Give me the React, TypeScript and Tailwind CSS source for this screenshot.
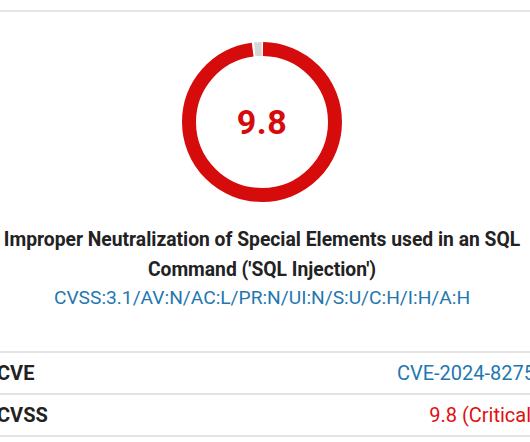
import React from 'react';

const score = 9.8;

function ScoreDonut({ value }: { value: number }) {
  const r = 73;
  const c = 2 * Math.PI * r;
  const gap = 2;
  const red = (value / 10) * c;
  const rest = c - red;

  return (
    <div className="relative w-[162px] h-[162px]">
      <svg width="162" height="162" viewBox="0 0 162 162" className="-rotate-90">
        <circle
          cx="81"
          cy="81"
          r={r}
          fill="none"
          stroke="#d60b0b"
          strokeWidth="14"
          strokeDasharray={`${red - gap} ${c}`}
          strokeDashoffset={-gap / 2}
        />
        <circle
          cx="81"
          cy="81"
          r={r}
          fill="none"
          stroke="#d6d6d6"
          strokeWidth="14"
          strokeDasharray={`${rest - gap} ${c}`}
          strokeDashoffset={-(red + gap / 2)}
        />
      </svg>
      <div className="absolute inset-0 flex items-center justify-center text-[34px] font-bold text-[#d60b0b] tracking-[0.5px]">
        {value}
      </div>
    </div>
  );
}

const rows = [
  { label: 'CVE', value: 'CVE-2024-8275', className: 'text-[#1f78b0]' },
  { label: 'CVSS', value: '9.8 (Critical)', className: 'text-[#e01010] -mr-[3px]' },
];

export default function App() {
  return (
    <div className="w-[530px] h-[442px] overflow-hidden bg-white font-['Roboto',sans-serif]">
      <div className="-ml-[16px] w-[556px]">
        <div className="mt-[10px] border-t-2 border-[#e6e6e6]" />

        {/* score ring */}
        <div className="flex justify-center mt-[29px]">
          <ScoreDonut value={score} />
        </div>

        {/* weakness title + vector */}
        <div className="mt-[22px] px-[14px] text-center">
          <h2 className="text-[19.3px] font-bold leading-[30px] text-[#222]">
            Improper Neutralization of Special Elements used in an SQL Command ('SQL Injection')
          </h2>
          <p className="-mt-[1px] text-[19.2px] leading-[28px] text-[#1f78b0]">
            CVSS:3.1/AV:N/AC:L/PR:N/UI:N/S:U/C:H/I:H/A:H
          </p>
        </div>

        {/* details table */}
        <div className="mt-[39px] border-t-2 border-[#e3e3e3]">
          {rows.map((row) => (
            <div
              key={row.label}
              className="flex items-center justify-between h-[42px] pl-[13px] pr-[5px] border-b-2 border-[#e3e3e3]"
            >
              <span className="text-[20px] font-bold text-[#222]">{row.label}</span>
              <span className={`text-[20px] ${row.className}`}>{row.value}</span>
            </div>
          ))}
        </div>
      </div>
    </div>
  );
}
